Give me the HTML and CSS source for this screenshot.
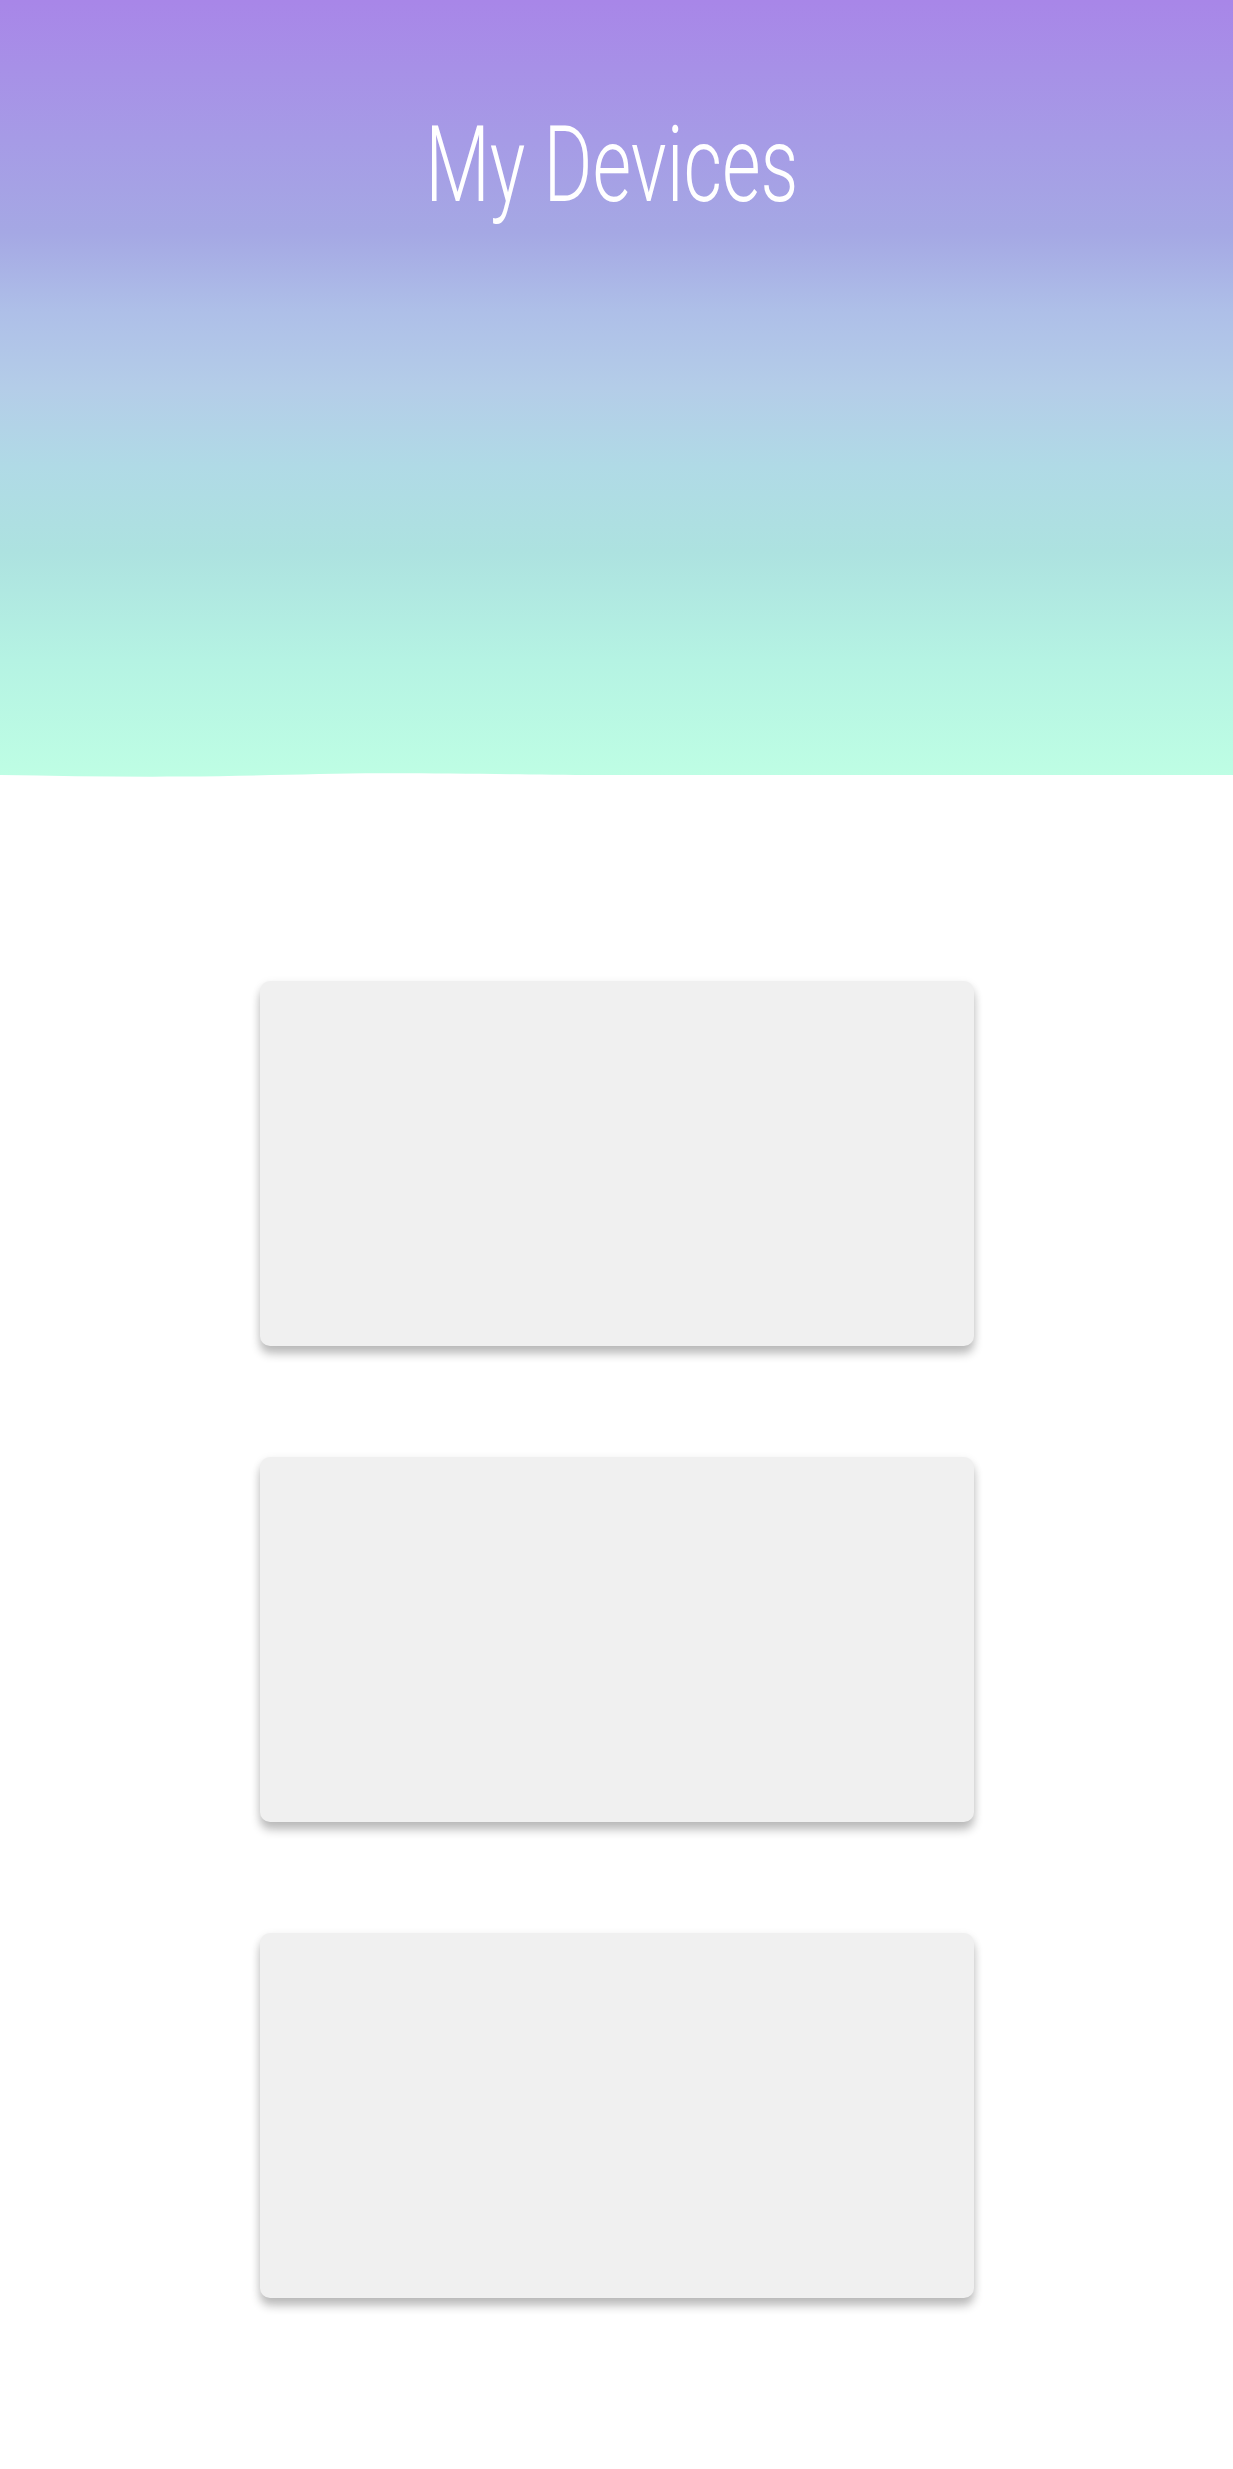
FILE: index.html
```html
<!DOCTYPE html>
<html lang="en">
<head>
<meta charset="utf-8">
<title>My Devices</title>
<link rel="stylesheet" href="styles.css">
</head>
<body>
<header class="hero">
  <h1 class="hero-title">My Devices</h1>
  <svg class="hero-wave" viewBox="0 0 1233 12" preserveAspectRatio="none" aria-hidden="true">
    <path d="M0,10 C60,11 120,12 180,11.6 C260,11 320,8.5 380,8.3 C460,8.2 520,9.6 600,10 L1233,10 L1233,12 L0,12 Z" fill="#ffffff"/>
  </svg>
</header>
<main class="devices">
  <section class="device-card"></section>
  <section class="device-card"></section>
  <section class="device-card"></section>
</main>
</body>
</html>
```
FILE: styles.css
```css
html, body {
  margin: 0;
  padding: 0;
  background: #ffffff;
}
body {
  font-family: Roboto, "Liberation Sans", sans-serif;
  width: 1233px;
  min-height: 2469px;
}
.hero {
  position: relative;
  height: 777px;
  background: linear-gradient(180deg,
    #a886e8 0%,
    #a69be6 18%,
    #a5a8e4 30%,
    #aebfe8 40%,
    #b4cde8 50%,
    #b0dae6 60%,
    #ade2e0 71%,
    #b5f3e3 85%,
    #befee4 100%);
  display: flex;
  justify-content: center;
  align-items: flex-start;
}
.hero-title {
  margin: 100px 0 0;
  padding-right: 14px;
  color: #ffffff;
  font-family: Roboto, "Liberation Sans", sans-serif;
  font-weight: 300;
  font-size: 106px;
  line-height: 130px;
  letter-spacing: 0;
  transform: scaleX(0.705);
  transform-origin: center top;
  white-space: nowrap;
}
.hero-wave {
  position: absolute;
  left: 0;
  bottom: 0;
  width: 100%;
  height: 12px;
  display: block;
}
.devices {
  display: flex;
  flex-direction: column;
  align-items: center;
  gap: 111px;
  padding: 204px 0 172px;
}
.device-card {
  width: 714px;
  height: 365px;
  background: #f0f0f0;
  border-radius: 10px;
  box-shadow: 0 8px 10px rgba(0, 0, 0, 0.24), 0 2px 10px rgba(0, 0, 0, 0.07);
}
```
